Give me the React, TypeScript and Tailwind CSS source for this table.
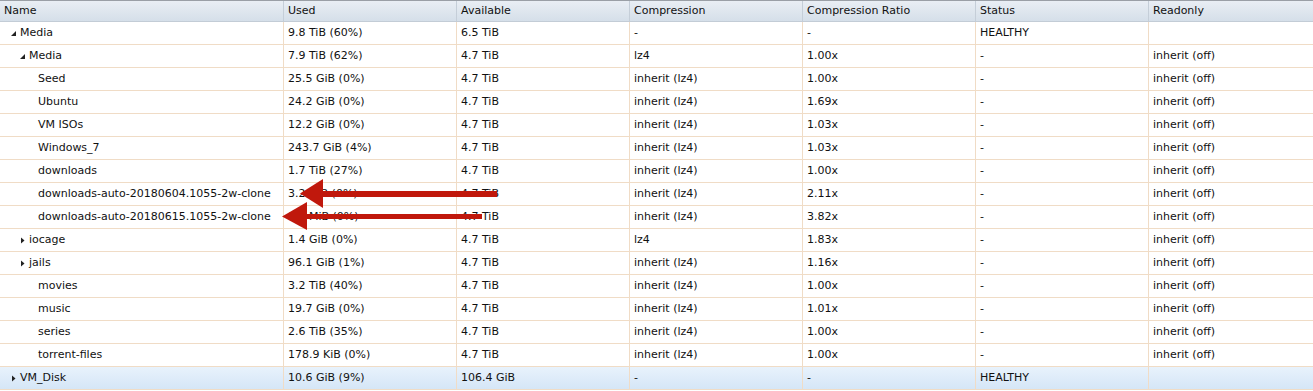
import React from 'react';

type Row = {
    name: string;
    level: number;
    toggle?: 'open' | 'closed';
    used: string;
    avail: string;
    comp: string;
    ratio: string;
    status: string;
    ro: string;
    selected?: boolean;
};

const rows: Row[] = [
    { name: 'Media', level: 0, toggle: 'open', used: '9.8 TiB (60%)', avail: '6.5 TiB', comp: '-', ratio: '-', status: 'HEALTHY', ro: '' },
    { name: 'Media', level: 1, toggle: 'open', used: '7.9 TiB (62%)', avail: '4.7 TiB', comp: 'lz4', ratio: '1.00x', status: '-', ro: 'inherit (off)' },
    { name: 'Seed', level: 2, used: '25.5 GiB (0%)', avail: '4.7 TiB', comp: 'inherit (lz4)', ratio: '1.00x', status: '-', ro: 'inherit (off)' },
    { name: 'Ubuntu', level: 2, used: '24.2 GiB (0%)', avail: '4.7 TiB', comp: 'inherit (lz4)', ratio: '1.69x', status: '-', ro: 'inherit (off)' },
    { name: 'VM ISOs', level: 2, used: '12.2 GiB (0%)', avail: '4.7 TiB', comp: 'inherit (lz4)', ratio: '1.03x', status: '-', ro: 'inherit (off)' },
    { name: 'Windows_7', level: 2, used: '243.7 GiB (4%)', avail: '4.7 TiB', comp: 'inherit (lz4)', ratio: '1.03x', status: '-', ro: 'inherit (off)' },
    { name: 'downloads', level: 2, used: '1.7 TiB (27%)', avail: '4.7 TiB', comp: 'inherit (lz4)', ratio: '1.00x', status: '-', ro: 'inherit (off)' },
    { name: 'downloads-auto-20180604.1055-2w-clone', level: 2, used: '3.2 GiB (0%)', avail: '4.7 TiB', comp: 'inherit (lz4)', ratio: '2.11x', status: '-', ro: 'inherit (off)' },
    { name: 'downloads-auto-20180615.1055-2w-clone', level: 2, used: '9.5 MiB (0%)', avail: '4.7 TiB', comp: 'inherit (lz4)', ratio: '3.82x', status: '-', ro: 'inherit (off)' },
    { name: 'iocage', level: 1, toggle: 'closed', used: '1.4 GiB (0%)', avail: '4.7 TiB', comp: 'lz4', ratio: '1.83x', status: '-', ro: 'inherit (off)' },
    { name: 'jails', level: 1, toggle: 'closed', used: '96.1 GiB (1%)', avail: '4.7 TiB', comp: 'inherit (lz4)', ratio: '1.16x', status: '-', ro: 'inherit (off)' },
    { name: 'movies', level: 2, used: '3.2 TiB (40%)', avail: '4.7 TiB', comp: 'inherit (lz4)', ratio: '1.00x', status: '-', ro: 'inherit (off)' },
    { name: 'music', level: 2, used: '19.7 GiB (0%)', avail: '4.7 TiB', comp: 'inherit (lz4)', ratio: '1.01x', status: '-', ro: 'inherit (off)' },
    { name: 'series', level: 2, used: '2.6 TiB (35%)', avail: '4.7 TiB', comp: 'inherit (lz4)', ratio: '1.00x', status: '-', ro: 'inherit (off)' },
    { name: 'torrent-files', level: 2, used: '178.9 KiB (0%)', avail: '4.7 TiB', comp: 'inherit (lz4)', ratio: '1.00x', status: '-', ro: 'inherit (off)' },
    { name: 'VM_Disk', level: 0, toggle: 'closed', used: '10.6 GiB (9%)', avail: '106.4 GiB', comp: '-', ratio: '-', status: 'HEALTHY', ro: '', selected: true },
];

const cols = 'grid grid-cols-[283px_173px_173px_173px_173px_173px_165px]';
const headers = ['Name', 'Used', 'Available', 'Compression', 'Compression Ratio', 'Status', 'Readonly'];
const indent = ['pl-[10px]', 'pl-[19px]', 'pl-[28px]'];

function Toggle({ kind }: { kind?: 'open' | 'closed' }) {
    if (!kind) return <span className="w-[10px] shrink-0" />;
    return (
        <svg width="10" height="10" viewBox="0 0 10 10" className="shrink-0">
            {kind === 'open'
                ? <polygon points="1,8 6,8 6,3" fill="#222" />
                : <polygon points="2,2.5 5.5,5.5 2,8.5" fill="#222" />}
        </svg>
    );
}

export default function App() {
    return (
        <div className="relative w-[1313px] h-[391px] bg-white overflow-hidden text-[11px] text-[#111]" style={{ fontFamily: '"DejaVu Sans", Verdana, sans-serif' }}>
            <div className={`${cols} h-[22px] border-t border-[#9a9fa6] border-b border-b-[#c3ccd6] bg-gradient-to-b from-[#e9eef4] to-[#d5dfe9]`}>
                {headers.map((h, i) => (
                    <div key={h} className={`flex items-center px-[4px] ${i > 0 ? 'border-l border-[#c5ced8]' : ''}`}>{h}</div>
                ))}
            </div>
            {rows.map((r, idx) => {
                const cells = [r.used, r.avail, r.comp, r.ratio, r.status, r.ro];
                return (
                    <div
                        key={idx}
                        className={`${cols} h-[23px] border-b border-[#f0dcc6] ${r.selected ? 'bg-gradient-to-b from-[#e8f2fc] to-[#d5e6f7]' : ''}`}
                    >
                        <div className={`flex items-center ${indent[r.level]}`}>
                            <Toggle kind={r.toggle} />
                            <span className="whitespace-nowrap">{r.name}</span>
                        </div>
                        {cells.map((c, i) => (
                            <div key={i} className="flex items-center px-[4px] border-l border-[#f0dcc6] whitespace-nowrap">{c}</div>
                        ))}
                    </div>
                );
            })}

            {/* annotation arrows */}
            <svg className="absolute left-0 top-0 pointer-events-none" width="1313" height="391">
                <rect x="318" y="191" width="179" height="6" fill="#c0180c" />
                <polygon points="300,193.5 323,179 323,208" fill="#c0180c" />
                <rect x="303" y="214" width="179" height="5" fill="#c0180c" />
                <polygon points="282,216.5 307,202 307,230" fill="#c0180c" />
            </svg>
        </div>
    );
}
